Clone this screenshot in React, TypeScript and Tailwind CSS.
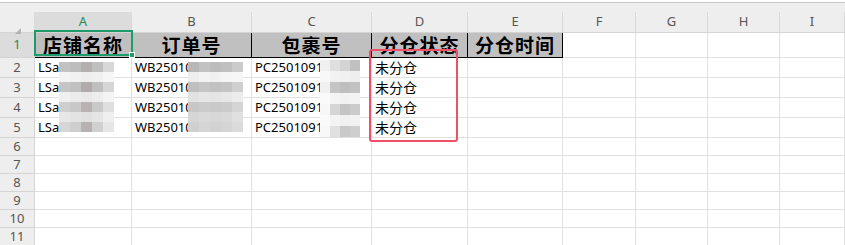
import React from "react";

const COLS = ["A", "B", "C", "D", "E", "F", "G", "H", "I"];
const WIDTHS = [97, 120, 120, 96, 95, 73, 72, 72, 65];
const HEADERS = ["店铺名称", "订单号", "包裹号", "分仓状态", "分仓时间"];

const ROWS = [
  ["LSa", "WB25010", "PC2501091", "未分仓"],
  ["LSa", "WB25010", "PC2501091", "未分仓"],
  ["LSa", "WB25010", "PC2501091", "未分仓"],
  ["LSa", "WB25010", "PC2501091", "未分仓"],
];

// pixel mosaic used to hide the data
function Mosaic({ left, top, cell, colors }: { left: number; top: number; cell: [number, number]; colors: string[][] }) {
  return (
    <div className="absolute flex flex-col" style={{ left, top }}>
      {colors.map((row, i) => (
        <div key={i} className="flex">
          {row.map((c, j) => (
            <div key={j} style={{ width: cell[0], height: cell[1], background: c }} />
          ))}
        </div>
      ))}
    </div>
  );
}

const mosaicA = [
  ["#c2c2c2", "#bdbdbd", "#b4afaf", "#bfbfbf", "#d8d8d8"],
  ["#f3f3f3", "#f1f1f1", "#eeeeee", "#f0f0f0", "#f6f6f6"],
  ["#c5c5c5", "#c1c1c1", "#b1abab", "#bfbfbf", "#d6d6d6"],
  ["#f0f0f0", "#ececec", "#e9e9e9", "#ededed", "#f4f4f4"],
  ["#cecece", "#c8c8c8", "#b8b2b2", "#c9c9c9", "#dfdfdf"],
  ["#e7e7e7", "#e3e3e3", "#e0e0e0", "#e5e5e5", "#efefef"],
  ["#d6d6d6", "#cecece", "#b7b1b1", "#d0d0d0", "#e6e6e6"],
];

const mosaicB = [
  ["#b8b8b8", "#c2c2c2", "#bcbcbc", "#c0c0c0", "#cbcbcb"],
  ["#eeeeee", "#f3f3f3", "#f1f1f1", "#f5f5f5", "#f6f6f6"],
  ["#bfbfbf", "#c5c5c5", "#c1c1c1", "#c4c4c4", "#cfcfcf"],
  ["#e2e2e2", "#e6e6e6", "#e4e4e4", "#e7e7e7", "#ececec"],
  ["#c7c7c7", "#cbcbcb", "#c9c9c9", "#cbcbcb", "#d5d5d5"],
  ["#d6d6d6", "#d9d9d9", "#d7d7d7", "#d9d9d9", "#e0e0e0"],
  ["#d0d0d0", "#d5d5d5", "#d2d2d2", "#d5d5d5", "#dbdbdb"],
];

const mosaicC = [
  ["#efefef", "#dfdfdf", "#d4d4d4", "#c0c0c0"],
  ["#f8f8f8", "#f2f2f2", "#f0f0f0", "#eeeeee"],
  ["#f0f0f0", "#c5c5c5", "#bebebe", "#c2c2c2"],
  ["#fafafa", "#f4f4f4", "#f2f2f2", "#f3f3f3"],
  ["#f7f7f7", "#d5d5d5", "#c4c4c4", "#cbcbcb"],
  ["#fafafa", "#f3f3f3", "#f0f0f0", "#f2f2f2"],
  ["#f8f8f8", "#e0e0e0", "#c9c9c9", "#cecece"],
];

const cellBase = "border-r border-b border-[#e1e1e1] shrink-0 overflow-hidden whitespace-nowrap";

export default function App() {
  const emptyRows = [6, 7, 8, 9, 10, 11];

  return (
    <div
      className="relative w-[845px] h-[245px] overflow-hidden bg-white text-black"
      style={{ fontFamily: '"Noto Sans", "Noto Sans CJK SC", sans-serif' }}
    >
      {/* top strip */}
      <div className="h-[10px] bg-[#eeeeee] border-t-[1px] border-[#c6c6c6] mt-[2px] box-border" />

      {/* column header row */}
      <div className="flex h-[20px] bg-[#eeeeee] border-b border-[#d4d4d4] box-content">
        <div className="w-[35px] shrink-0 relative border-r border-[#dadada]">
          <div className="absolute right-[13px] bottom-[-2px] w-0 h-0 border-l-[6px] border-l-transparent border-b-[6px] border-b-[#b3b3b3]" />
        </div>
        {COLS.map((c, i) => (
          <div
            key={c}
            className={`shrink-0 flex items-center justify-center text-[13px] border-r border-[#dadada] ${
              i === 0 ? "bg-[#dcdcdc] text-[#1d8a5b]" : "text-[#555555]"
            }`}
            style={{ width: WIDTHS[i] }}
          >
            {c}
          </div>
        ))}
      </div>

      {/* row 1 headers */}
      <div className="flex h-[25px]">
        <div className="w-[35px] shrink-0 flex items-center justify-center text-[13px] text-[#1d8a5b] bg-[#dcdcdc] border-r border-b border-[#d4d4d4]">
          1
        </div>
        {COLS.map((c, i) =>
          i < 5 ? (
            <div
              key={c}
              className="shrink-0 flex items-center justify-center bg-[#c0c0c0] border-r border-b border-black text-[19px] font-bold tracking-[1px]"
              style={{ width: WIDTHS[i], fontFamily: '"Noto Sans CJK SC", serif' }}
            >
              {HEADERS[i]}
            </div>
          ) : (
            <div key={c} className={cellBase} style={{ width: WIDTHS[i] }} />
          )
        )}
      </div>

      {/* data rows */}
      {ROWS.map((r, ri) => (
        <div key={ri} className="flex h-[20px]">
          <div className="w-[35px] shrink-0 flex items-center justify-center text-[13px] text-[#555555] bg-[#eeeeee] border-r border-b border-[#d4d4d4]">
            {ri + 2}
          </div>
          {COLS.map((c, i) => (
            <div
              key={c}
              className={`${cellBase} flex items-center pl-[3px] ${i === 3 ? "text-[14px]" : "text-[13px]"}`}
              style={{ width: WIDTHS[i] }}
            >
              {r[i] ?? ""}
            </div>
          ))}
        </div>
      ))}

      {/* empty rows */}
      {emptyRows.map((n) => (
        <div key={n} className="flex h-[18px]">
          <div className="w-[35px] shrink-0 flex items-center justify-center text-[13px] text-[#555555] bg-[#eeeeee] border-r border-b border-[#d4d4d4]">
            {n}
          </div>
          {COLS.map((c, i) => (
            <div key={c} className={cellBase} style={{ width: WIDTHS[i] }} />
          ))}
        </div>
      ))}
      <div className="flex h-[18px]">
        <div className="w-[35px] shrink-0 bg-[#eeeeee] border-r border-[#d4d4d4]" />
        {COLS.map((c, i) => (
          <div key={c} className="shrink-0 border-r border-[#e1e1e1]" style={{ width: WIDTHS[i] }} />
        ))}
      </div>

      {/* mosaics */}
      <Mosaic left={59} top={62} cell={[11, 10]} colors={mosaicA} />
      <Mosaic left={188} top={62} cell={[11, 10]} colors={mosaicB} />
      <Mosaic left={320} top={60} cell={[10, 11]} colors={mosaicC} />

      {/* selection on A1 */}
      <div className="absolute left-[34px] top-[30px] w-[99px] h-[26px] border-2 border-[#1f9a6a]" />
      <div className="absolute left-[129px] top-[52px] w-[6px] h-[6px] bg-[#1f9a6a] border border-white" />

      {/* red highlight */}
      <div className="absolute left-[369px] top-[49px] w-[89px] h-[93px] border-2 border-[#ef5068] rounded-[3px]" />
    </div>
  );
}
